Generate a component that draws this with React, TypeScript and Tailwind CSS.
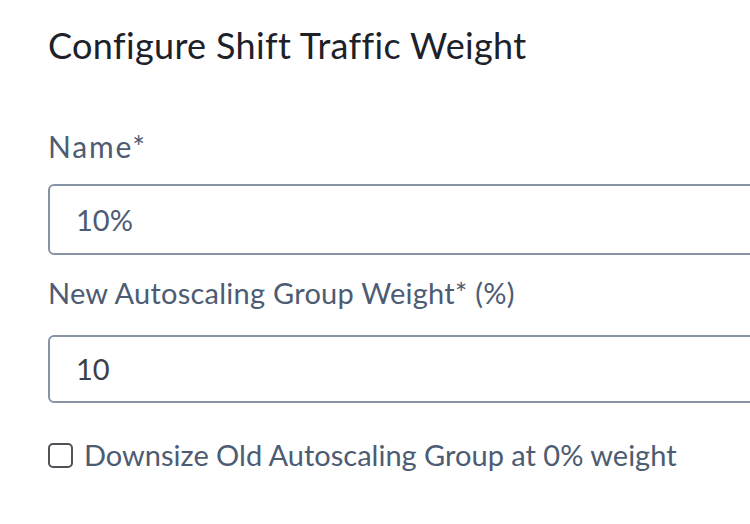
export default function App() {
    return (
        <div
            className="w-[750px] h-[524px] overflow-hidden bg-white pl-12 pt-[23px]"
            style={{ fontFamily: "Lato, 'Open Sans', sans-serif" }}
        >
            <h1 className="text-[36px] leading-[44px] tracking-[0.35px] text-[#1d2129]">
                Configure Shift Traffic Weight
            </h1>
            <div className="mt-[61px] text-[30px] leading-[36px] tracking-[1.8px] text-[#4d5c72]">
                Name*
            </div>
            <div className="mt-[20px] w-[720px] h-[71px] border-2 border-[#8893a5] rounded-md flex items-center pl-[26px] text-[29px] text-[#4d5c72]">
                10%
            </div>
            <div className="mt-[20px] text-[29px] leading-[36px] tracking-[0.25px] text-[#4d5c72]">
                New Autoscaling Group Weight* (%)
            </div>
            <div className="mt-[24px] w-[720px] h-[68px] border-2 border-[#8893a5] rounded-md flex items-center pl-[26px] text-[29px] text-[#3b4048]">
                10
            </div>
            <label className="mt-[34px] flex items-center gap-[11px] text-[29px] leading-[36px] text-[#4d5c72]">
                <span className="w-[25px] h-[25px] border-2 border-[#4f5358] rounded-[5px] bg-white" />
                Downsize Old Autoscaling Group at 0% weight
            </label>
        </div>
    );
}
